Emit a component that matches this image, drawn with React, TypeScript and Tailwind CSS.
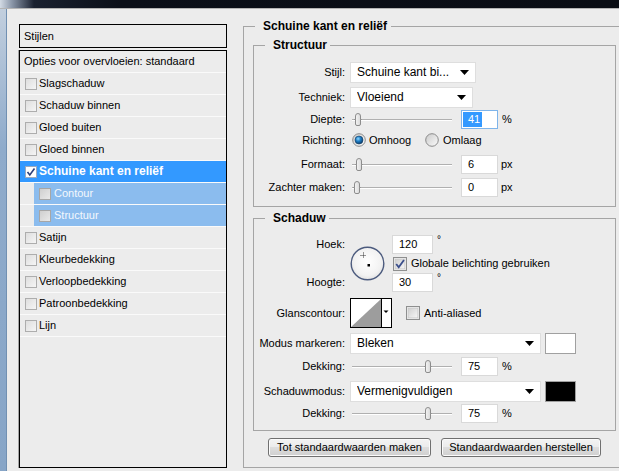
import React from "react";

function Arrow() {
  return (
    <svg width="9" height="5" viewBox="0 0 9 5" className="shrink-0">
      <polygon points="0,0 9,0 4.5,5" fill="#000" />
    </svg>
  );
}

function Select({ text, w }: { text: string; w: string }) {
  return (
    <div className={`${w} h-[21px] bg-white border border-[#dedede] flex items-center pl-[6px] pr-[6px] text-[12px]`}>
      <span className="flex-1 whitespace-nowrap overflow-hidden">{text}</span>
      <Arrow />
    </div>
  );
}

function Slider({ pos }: { pos: number }) {
  return (
    <div className="relative w-[105px] h-[19px] shrink-0">
      <div className="absolute left-[2px] right-[3px] top-[9px] h-px bg-[#b0b0b0]" />
      <div className="absolute left-[2px] right-[3px] top-[10px] h-px bg-white" />
      <svg className="absolute top-[3px]" style={{ left: pos }} width="8" height="13" viewBox="0 0 8 13">
        <defs>
          <linearGradient id="thumbg" x1="0" y1="0" x2="1" y2="0">
            <stop offset="0" stopColor="#f4f4f4" />
            <stop offset="1" stopColor="#d9d9d9" />
          </linearGradient>
        </defs>
        <path d="M1.5 3 Q1.5 0.5 4 0.5 Q6.5 0.5 6.5 3 L6.5 11 Q6.5 12.5 5 12.5 L3 12.5 Q1.5 12.5 1.5 11 Z" fill="url(#thumbg)" stroke="#8c8c8c" />
        <line x1="0" y1="6.5" x2="1.5" y2="6.5" stroke="#9a9a9a" />
        <line x1="6.5" y1="6.5" x2="8" y2="6.5" stroke="#9a9a9a" />
      </svg>
    </div>
  );
}

function Num({ v, w, focused }: { v: string; w: string; focused?: boolean }) {
  return (
    <div
      className={`${w} h-[19px] bg-white border ${focused ? "border-[#7eb4ea]" : "border-[#d9d9d9]"} flex items-center text-[11px] shrink-0`}
    >
      {focused ? (
        <span className="ml-px h-[15px] bg-[#3399ff] text-white pl-[5px] pr-[2px] leading-[15px]">{v}</span>
      ) : (
        <span className="pl-[6px]">{v}</span>
      )}
    </div>
  );
}

function Check({ checked, size = 13 }: { checked?: boolean; size?: number }) {
  return (
    <svg width={size} height={size} viewBox="0 0 13 13" className="shrink-0">
      <defs>
        <linearGradient id="cbg" x1="0" y1="0" x2="1" y2="1">
          <stop offset="0" stopColor="#cfcfcf" />
          <stop offset="1" stopColor="#f7f7f7" />
        </linearGradient>
      </defs>
      <rect x="0.5" y="0.5" width="12" height="12" fill="#f4f4f4" stroke="#8e8f8f" />
      <rect x="2" y="2" width="9" height="9" fill="url(#cbg)" stroke="#c4c4c4" strokeWidth="0.6" />
      {checked && <path d="M3 6.5 L5.3 9.5 L10.2 2.8" fill="none" stroke="#3b4f8c" strokeWidth="1.7" />}
    </svg>
  );
}

function Radio({ on }: { on?: boolean }) {
  return (
    <svg width="14" height="14" viewBox="0 0 14 14" className="shrink-0">
      <defs>
        <linearGradient id="rgr" x1="0" y1="0" x2="1" y2="1">
          <stop offset="0" stopColor="#c9c9c9" />
          <stop offset="1" stopColor="#fcfcfc" />
        </linearGradient>
        <radialGradient id="rbl" cx="40%" cy="35%" r="70%">
          <stop offset="0" stopColor="#8fd8ff" />
          <stop offset="0.45" stopColor="#1d7cc4" />
          <stop offset="1" stopColor="#0a355f" />
        </radialGradient>
      </defs>
      <circle cx="7" cy="7" r="6.3" fill="url(#rgr)" stroke="#8a8a8a" />
      {on && <circle cx="7" cy="7" r="4" fill="url(#rbl)" stroke="#173f66" strokeWidth="0.6" />}
    </svg>
  );
}

function ListBox({ checked, light }: { checked?: boolean; light?: boolean }) {
  return (
    <div
      className={`w-[12px] h-[12px] shrink-0 border ${
        light ? "border-[#a6a6a6] bg-[linear-gradient(135deg,#cfcfcf,#e9e9e9)]" : checked ? "border-[#9aa9bf] bg-white" : "border-[#adadad] bg-[linear-gradient(135deg,#dedede,#f5f5f5)]"
      } flex items-center justify-center`}
    >
      {checked && (
        <svg width="10" height="10" viewBox="0 0 10 10">
          <path d="M1.5 5 L3.8 8 L8.5 1.5" fill="none" stroke="#2c3f7a" strokeWidth="1.6" />
        </svg>
      )}
    </div>
  );
}

const plain = ["Satijn", "Kleurbedekking", "Verloopbedekking", "Patroonbedekking", "Lijn"];
const top = ["Slagschaduw", "Schaduw binnen", "Gloed buiten", "Gloed binnen"];

function Row({ label, children }: { label: string; children: React.ReactNode }) {
  return (
    <div className="flex items-center">
      <div className="w-[91px] text-right whitespace-nowrap shrink-0">{label}</div>
      <div className="ml-[5px] flex items-center">{children}</div>
    </div>
  );
}

export default function App() {
  return (
    <div className="w-[619px] h-[471px] overflow-hidden bg-[#ececec] text-black text-[11px] leading-[13px] font-['Liberation_Sans',Arial,sans-serif] flex flex-col">
      <div className="h-[8px] shrink-0 bg-[linear-gradient(to_right,#d3dbe5_0px,#8a96a8_12px,#1a2130_34px,#0b0f18_120px,#0a0d14_100%)]" />
      <div className="h-px shrink-0 bg-[#b4b4b4]" />
      <div className="flex flex-1 min-h-0">
        <div className="w-[7px] shrink-0 bg-[linear-gradient(to_bottom,#c2cfde,#8fabcb_30%,#87a5c7)] border-r border-[#7190b2]" />
        {/* Left list */}
        <div className="pl-[12px] pt-[15px] shrink-0">
          <div className="w-[208px] h-[24px] border border-black flex items-center pl-[4px]">Stijlen</div>
          <div className="mt-[2px] w-[208px] h-[418px] border border-black shadow-[-1px_0_0_#a4a4a4]">
            <div className="h-[22px] border-b border-[#fafafa] flex items-center pl-[4px]">Opties voor overvloeien: standaard</div>
            {top.map((t) => (
              <div key={t} className="h-[22px] border-b border-[#fafafa] flex items-center pl-[5px] gap-[2px]">
                <ListBox />
                <span>{t}</span>
              </div>
            ))}
            <div className="h-[22px] border-b border-[#fafafa] bg-[#3399ff] flex items-center pl-[5px] gap-[2px] text-white font-bold text-[12px]">
              <ListBox checked />
              <span>Schuine kant en reliëf</span>
            </div>
            {["Contour", "Structuur"].map((t) => (
              <div key={t} className="h-[22px] border-b border-[#fafafa] pl-[14px] flex">
                <div className="flex-1 bg-[#8bbcee] flex items-center pl-[5px] gap-[3px] text-[#f4f8fd]">
                  <ListBox light />
                  <span>{t}</span>
                </div>
              </div>
            ))}
            {plain.map((t) => (
              <div key={t} className="h-[22px] border-b border-[#fafafa] flex items-center pl-[5px] gap-[2px]">
                <ListBox />
                <span>{t}</span>
              </div>
            ))}
          </div>
        </div>
        {/* Right */}
        <fieldset className="mt-[10px] ml-[16px] w-[383px] h-[449px] shrink-0 border border-[#a5a5a5] px-[9px]">
          <legend className="ml-[2px] pl-[8px] pr-[4px] font-bold text-[12px] leading-[14px]">Schuine kant en reliëf</legend>
          <fieldset className="mt-[5px] h-[169px] border border-[#a5a5a5]">
            <legend className="ml-[11px] pl-[8px] pr-[3px] font-bold text-[12px] leading-[14px]">Structuur</legend>
            <div className="mt-[10px] h-[21px]">
              <Row label="Stijl:">
                <Select text="Schuine kant bi..." w="w-[126px]" />
              </Row>
            </div>
            <div className="mt-[4px] h-[21px]">
              <Row label="Techniek:">
                <Select text="Vloeiend" w="w-[123px]" />
              </Row>
            </div>
            <div className="mt-[2px] h-[19px]">
              <Row label="Diepte:">
                <Slider pos={4} />
                <div className="ml-[6px]"><Num v="41" w="w-[37px]" focused /></div>
                <span className="ml-[4px]">%</span>
              </Row>
            </div>
            <div className="mt-[4px] h-[19px]">
              <Row label="Richting:">
                <div className="w-[75px] flex items-center pl-[2px] gap-[3px]">
                  <Radio on />
                  <span>Omhoog</span>
                </div>
                <div className="flex items-center gap-[4px]">
                  <Radio />
                  <span>Omlaag</span>
                </div>
              </Row>
            </div>
            <div className="mt-[3px] h-[19px]">
              <Row label="Formaat:">
                <Slider pos={5} />
                <div className="ml-[6px]"><Num v="6" w="w-[37px]" /></div>
                <span className="ml-[3px]">px</span>
              </Row>
            </div>
            <div className="mt-[4px] h-[19px]">
              <Row label="Zachter maken:">
                <Slider pos={3} />
                <div className="ml-[6px]"><Num v="0" w="w-[37px]" /></div>
                <span className="ml-[3px]">px</span>
              </Row>
            </div>
          </fieldset>
          <fieldset className="mt-[4px] h-[220px] border border-[#a5a5a5]">
            <legend className="ml-[11px] pl-[8px] pr-[3px] font-bold text-[12px] leading-[14px]">Schaduw</legend>
            <div className="mt-[10px] h-[57px] flex">
              <div className="w-[91px] flex flex-col justify-between text-right shrink-0">
                <div className="h-[19px] leading-[19px]">Hoek:</div>
                <div className="h-[19px] leading-[19px]">Hoogte:</div>
              </div>
              <div className="ml-[5px] w-[42px] flex items-center">
                <svg width="35" height="35" viewBox="0 0 35 35">
                  <defs>
                    <radialGradient id="dial" cx="50%" cy="45%" r="60%">
                      <stop offset="0" stopColor="#ffffff" />
                      <stop offset="0.7" stopColor="#f2f2f2" />
                      <stop offset="1" stopColor="#dcdcdc" />
                    </radialGradient>
                  </defs>
                  <circle cx="17.5" cy="17.5" r="16.3" fill="url(#dial)" stroke="#4c5b7e" strokeWidth="1.4" />
                  <line x1="10.5" y1="9.5" x2="16.5" y2="9.5" stroke="#333" strokeDasharray="1 1" />
                  <line x1="13.5" y1="6.5" x2="13.5" y2="12.5" stroke="#333" strokeDasharray="1 1" />
                  <rect x="17.5" y="18" width="2.5" height="2.5" fill="#000" />
                </svg>
              </div>
              <div className="flex flex-col">
                <div className="flex items-start">
                  <div className="w-[41px] h-[19px] bg-white border border-[#d9d9d9] pl-[6px] leading-[17px]">120</div>
                  <span className="ml-[4px] text-[10px] leading-[10px]">°</span>
                </div>
                <div className="mt-[2px] h-[15px] flex items-center gap-[4px] ml-px">
                  <Check checked size={14} />
                  <span>Globale belichting gebruiken</span>
                </div>
                <div className="mt-[2px] flex items-start">
                  <div className="w-[41px] h-[19px] bg-white border border-[#d9d9d9] pl-[6px] leading-[17px]">30</div>
                  <span className="ml-[4px] text-[10px] leading-[10px]">°</span>
                </div>
              </div>
            </div>
            <div className="mt-[6px] h-[30px]">
              <Row label="Glanscontour:">
                <svg width="42" height="30" viewBox="0 0 42 30" className="shrink-0">
                  <rect x="0.5" y="0.5" width="41" height="29" fill="#fff" stroke="#000" />
                  <polygon points="1,29 31,1 31,29" fill="#9d9d9d" />
                  <line x1="31.5" y1="0" x2="31.5" y2="30" stroke="#000" />
                  <polygon points="33.5,12.5 38.5,12.5 36,15" fill="#000" />
                </svg>
                <div className="ml-[14px] flex items-center gap-[4px]">
                  <Check size={14} />
                  <span>Anti-aliased</span>
                </div>
              </Row>
            </div>
            <div className="mt-[5px] h-[21px]">
              <Row label="Modus markeren:">
                <Select text="Bleken" w="w-[191px]" />
                <div className="ml-[4px] w-[31px] h-[21px] bg-white border border-[#a0a0a0]" />
              </Row>
            </div>
            <div className="mt-[3px] h-[19px]">
              <Row label="Dekking:">
                <Slider pos={74} />
                <div className="ml-[6px]"><Num v="75" w="w-[37px]" /></div>
                <span className="ml-[4px]">%</span>
              </Row>
            </div>
            <div className="mt-[5px] h-[21px]">
              <Row label="Schaduwmodus:">
                <Select text="Vermenigvuldigen" w="w-[191px]" />
                <div className="ml-[4px] w-[31px] h-[21px] bg-black border border-[#a0a0a0]" />
              </Row>
            </div>
            <div className="mt-[2px] h-[19px]">
              <Row label="Dekking:">
                <Slider pos={74} />
                <div className="ml-[6px]"><Num v="75" w="w-[37px]" /></div>
                <span className="ml-[4px]">%</span>
              </Row>
            </div>
          </fieldset>
          <div className="mt-[7px] pl-[15px] flex gap-[10px]">
            <button className="w-[163px] h-[19px] rounded-[3px] border border-[#707070] bg-[linear-gradient(#f3f3f3,#ebebeb_50%,#dddddd_50%,#cfcfcf)] shadow-[inset_0_0_0_1px_#fbfbfb] text-[11px] leading-[15px]">
              Tot standaardwaarden maken
            </button>
            <button className="w-[160px] h-[19px] rounded-[3px] border border-[#707070] bg-[linear-gradient(#f3f3f3,#ebebeb_50%,#dddddd_50%,#cfcfcf)] shadow-[inset_0_0_0_1px_#fbfbfb] text-[11px] leading-[15px]">
              Standaardwaarden herstellen
            </button>
          </div>
        </fieldset>
      </div>
    </div>
  );
}
